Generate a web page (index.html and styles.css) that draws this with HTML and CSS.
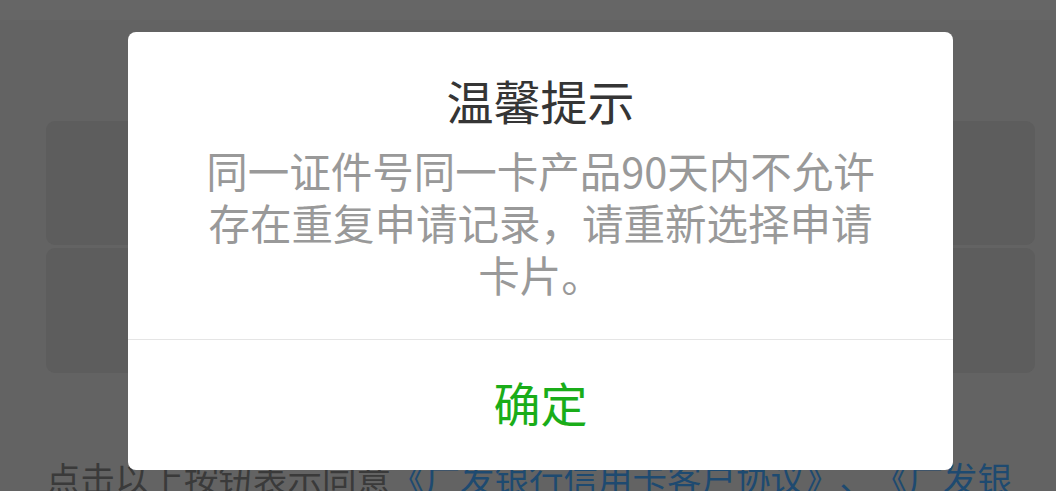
FILE: index.html
```html
<!DOCTYPE html>
<html lang="zh-CN">
<head>
<meta charset="utf-8">
<title>温馨提示</title>
<link rel="stylesheet" href="styles.css">
</head>
<body>
<div class="page">
  <div class="statusbar"></div>
  <div class="content">
    <div class="cards">
      <div class="card card-top"></div>
      <div class="card card-bottom"></div>
    </div>
    <p class="agreement">点击以上按钮表示同意<span class="link">《广发银行信用卡客户协议》、《广发银行信用卡领用合约》</span></p>
  </div>
</div>
<div class="dialog">
  <div class="dialog-body">
    <h2 class="dialog-title">温馨提示</h2>
    <p class="dialog-text">同一证件号同一卡产品90天内不允许存在重复申请记录，请重新选择申请卡片。</p>
  </div>
  <div class="dialog-footer">
    <button class="dialog-btn" type="button">确定</button>
  </div>
</div>
</body>
</html>
```
FILE: styles.css
```css
html, body {
  margin: 0;
  padding: 0;
}
body {
  width: 1056px;
  height: 491px;
  overflow: hidden;
  background: #636363;
  font-family: "Noto Sans CJK SC", "Noto Sans", sans-serif;
  position: relative;
  text-spacing-trim: space-all;
}
.page {
  display: flex;
  flex-direction: column;
}
.statusbar {
  height: 20px;
  background: #666666;
}
.content {
  padding: 0 16px 0 46px;
}
.cards {
  margin-top: 101px;
  margin-right: 5px;
  display: flex;
  flex-direction: column;
  gap: 3px;
}
.card {
  background: #5d5d5d;
  border-radius: 9px;
}
.card-top {
  height: 124px;
}
.card-bottom {
  height: 125px;
}
.agreement {
  margin: 80px 0 0;
  font-size: 34.5px;
  line-height: 48px;
  color: #3a3a3a;
}
.link {
  color: #1e4a70;
}
.dialog {
  position: absolute;
  left: 128px;
  top: 32px;
  width: 825px;
  height: 438px;
  background: #ffffff;
  border-radius: 8px;
  display: flex;
  flex-direction: column;
}
.dialog-body {
  padding: 38px 0 0;
  height: 307px;
  box-sizing: border-box;
  display: flex;
  flex-direction: column;
  align-items: center;
}
.dialog-title {
  margin: 0;
  font-size: 47px;
  line-height: 60px;
  font-weight: 400;
  color: #353535;
}
.dialog-text {
  margin: 14px 0 0;
  width: 690px;
  font-size: 41.5px;
  line-height: 52px;
  color: #999999;
  text-align: center;
}
.dialog-footer {
  border-top: 1px solid #e5e5e5;
  flex: 1;
  display: flex;
}
.dialog-btn {
  flex: 1;
  border: 0;
  background: transparent;
  padding: 0 0 8px;
  font-family: inherit;
  font-size: 47px;
  color: #1aad19;
}
```
